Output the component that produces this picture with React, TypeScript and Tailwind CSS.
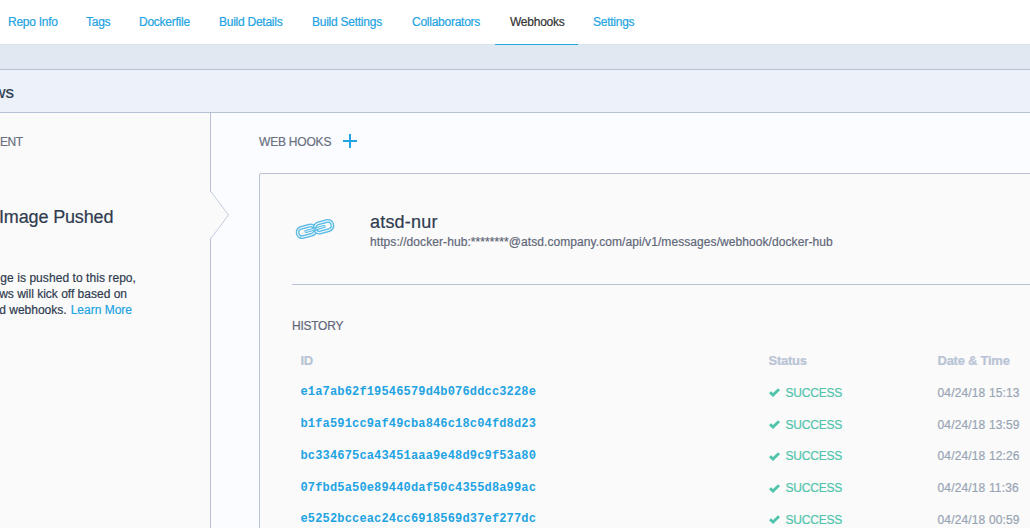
import React from "react";

const tabs = [
  { label: "Repo Info", width: "w-[78px]" },
  { label: "Tags", width: "w-[53px]" },
  { label: "Dockerfile", width: "w-[80px]" },
  { label: "Build Details", width: "w-[93px]" },
  { label: "Build Settings", width: "w-[100px]" },
  { label: "Collaborators", width: "w-[98px]" },
  { label: "Webhooks", width: "w-[83px]", active: true },
  { label: "Settings", width: "w-[71px]" },
];

const history = [
  { id: "e1a7ab62f19546579d4b076ddcc3228e", date: "04/24/18 15:13" },
  { id: "b1fa591cc9af49cba846c18c04fd8d23", date: "04/24/18 13:59" },
  { id: "bc334675ca43451aaa9e48d9c9f53a80", date: "04/24/18 12:26" },
  { id: "07fbd5a50e89440daf50c4355d8a99ac", date: "04/24/18 11:36" },
  { id: "e5252bcceac24cc6918569d37ef277dc", date: "04/24/18 00:59" },
];

function Check() {
  return (
    <svg viewBox="0 0 11 9" className="h-[9px] w-[11px] shrink-0" fill="none" stroke="#4fc4ab" strokeWidth="2.8">
      <path d="M1 4.3 4 7.1 10 1.2" />
    </svg>
  );
}

const leftLink = "M19.500 9.600a4.600 4.600 0 0 0-4-2.300H6.800a4.700 4.700 0 0 0 0 9.400h8.700a4.600 4.600 0 0 0 4-2.300";
const rightLink = "M20.500 9.600a4.600 4.600 0 0 1 4-2.300h8.700a4.700 4.700 0 0 1 0 9.400h-8.700a4.600 4.600 0 0 1-4-2.300";
const bars = "M10.500 12h7.500M22 12h7.500";

function ChainIcon() {
  return (
    <svg viewBox="0 0 40 24" className="h-6 w-10" fill="none" strokeLinecap="round">
      <g transform="rotate(-15 20 12)">
        <path d={leftLink} stroke="#56b9e6" strokeWidth="3.8" />
        <path d={leftLink} stroke="#e6f4fb" strokeWidth="1.3" />
        <path d={rightLink} stroke="#56b9e6" strokeWidth="3.8" />
        <path d={rightLink} stroke="#e6f4fb" strokeWidth="1.3" />
        <path d={bars} stroke="#56b9e6" strokeWidth="3" />
        <path d={bars} stroke="#e6f4fb" strokeWidth="1" />
      </g>
    </svg>
  );
}

export default function App() {
  return (
    <div className="flex h-[528px] w-[1030px] flex-col overflow-hidden bg-[#fbfcff] font-['Liberation_Sans',Arial,sans-serif] text-[12px] text-[#2f3b4f] [-webkit-text-stroke:0.2px]">
      <nav className="flex h-[45px] shrink-0 border-b border-[#d8e3eb] bg-white pl-2">
        {tabs.map((t) => (
          <a
            key={t.label}
            className={`-ml-[15px] mr-[15px] flex h-[45px] shrink-0 items-center whitespace-nowrap border-b pl-[15px] text-[12px] tracking-[-0.25px] ${t.width} ${
              t.active ? "border-[#22a7dc] text-[#333333]" : "border-transparent text-[#22a3e2]"
            }`}
          >
            {t.label}
          </a>
        ))}
      </nav>
      <div className="h-6 shrink-0 bg-[#e0e8f1]" />
      <header className="flex h-11 shrink-0 items-center border-y border-[#b8c2d5] bg-[#ecf1fa]">
        <h1 className="flex w-[14px] justify-end pt-[3px] text-[17px] font-normal">ws</h1>
      </header>
      <main className="flex min-h-0 flex-1">
        <aside className="relative w-[211px] shrink-0 border-r border-[#b8c2d5] bg-[#fafafa]">
          <h2 className="mt-[21px] h-4 leading-4 tracking-[-0.4px] text-[#697080]">ENT</h2>
          <h3 className="-ml-px mt-[55px] h-6 whitespace-nowrap text-[18px] leading-6 tracking-[-0.15px]">Image Pushed</h3>
          <div className="mt-[41px] whitespace-nowrap leading-4">
            <p className="flex w-[136px] justify-end tracking-[0.06px]">ge is pushed to this repo,</p>
            <p className="flex w-[127px] justify-end">ws will kick off based on</p>
            <p className="flex w-[132px] justify-end gap-1">
              <span>d webhooks.</span>
              <a className="text-[#22a3e2]">Learn More</a>
            </p>
          </div>
          <svg viewBox="0 0 20 50" className="absolute -right-[20px] top-[77px] h-[50px] w-5">
            <path d="M0 1 18.5 25 0 49Z" fill="#fafafa" />
            <path d="M.5 1 18.5 25 .5 49" fill="none" stroke="#c3cbda" />
          </svg>
        </aside>
        <section className="flex min-w-0 flex-1 flex-col pl-12">
          <div className="flex h-[60px] shrink-0 items-center gap-3 pb-[4px]">
            <h2 className="w-[72px] whitespace-nowrap pt-px tracking-[-0.2px] text-[#697080]">WEB HOOKS</h2>
            <svg viewBox="0 0 14 14" className="size-[14px]" stroke="#22a3e2" strokeWidth="2">
              <path d="M7 0v14M0 7h14" />
            </svg>
          </div>
          <article className="-mr-2 flex-1 rounded-tl-[2px] border border-[#b8c2d5] bg-[#fafafa] pl-8">
            <div className="flex h-[111px] border-b border-[#b8c2d5]">
              <div className="mt-[43px] w-[78px] pl-[3px]">
                <ChainIcon />
              </div>
              <div className="mt-[37px] whitespace-nowrap">
                <h3 className="text-[18px] leading-[22px] tracking-[0.2px]">atsd-nur</h3>
                <p className="pt-px leading-4 tracking-[0.075px] text-[#5f6778]">
                  https://docker-hub:********@atsd.company.com/api/v1/messages/webhook/docker-hub
                </p>
              </div>
            </div>
            <h4 className="mt-[33px] h-4 leading-4 tracking-[-0.25px] text-[#5f6778]">HISTORY</h4>
            <div className="mt-[19px] grid grid-cols-[468px_169px_100px] pl-[8.5px] text-[13px] font-bold leading-4 tracking-[-0.25px] text-[#b8c4d5]">
              <span>ID</span>
              <span>Status</span>
              <span>Date &amp; Time</span>
            </div>
            <div className="mt-[8px]">
              {history.map((h) => (
                <div key={h.id} className="grid h-[31.75px] grid-cols-[468px_169px_100px] items-center whitespace-nowrap pl-[8.5px] leading-4">
                  <a className="pb-px font-['Liberation_Mono',monospace] text-[12px] font-bold tracking-[0.16px] text-[#22a3e2] [-webkit-text-stroke:0px]">{h.id}</a>
                  <span className="flex items-center gap-[6px] tracking-[-0.2px] text-[#4fc4ab]">
                    <Check />
                    SUCCESS
                  </span>
                  <span className="tracking-[0.15px] text-[#98a4b4]">{h.date}</span>
                </div>
              ))}
            </div>
          </article>
        </section>
      </main>
    </div>
  );
}
